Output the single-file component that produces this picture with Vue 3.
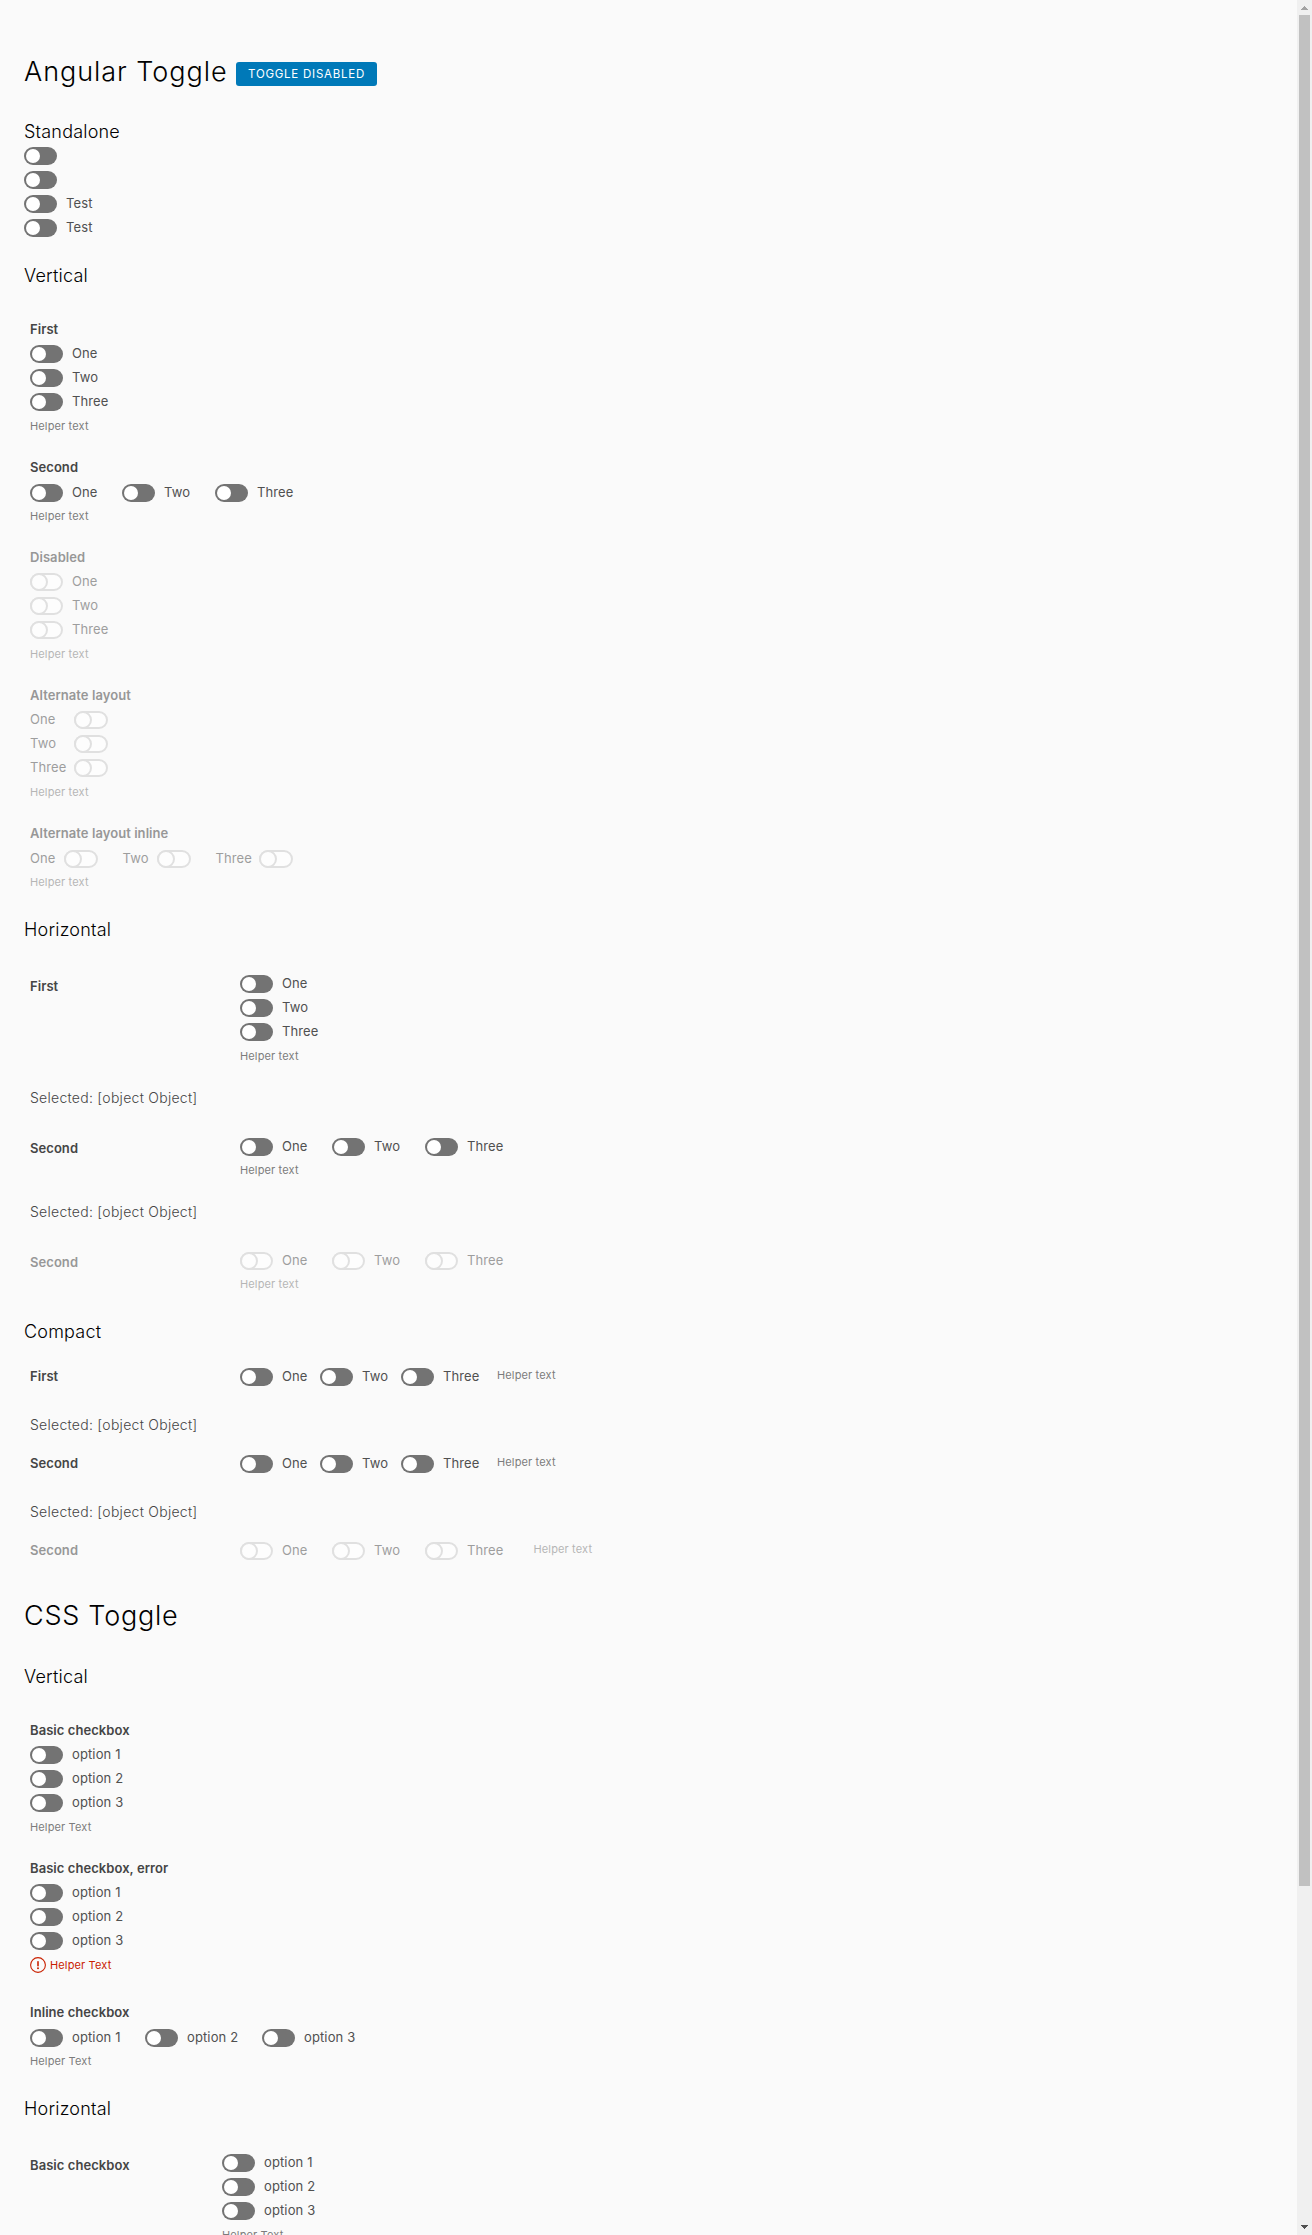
<script setup>
import { h } from 'vue'

const names = ['One', 'Two', 'Three']
const options = ['option 1', 'option 2', 'option 3']

const verticalGroups = [
  { title: 'First', items: names },
  { title: 'Second', items: names, inline: true, widths: [92, 93, 90] },
  { title: 'Disabled', items: names, disabled: true },
  { title: 'Alternate layout', items: names, disabled: true, alt: true },
  { title: 'Alternate layout inline', items: names, disabled: true, alt: true, inline: true, widths: [68, 68.5, 77.5] },
]
const cssGroups = [
  { title: 'Basic checkbox', items: options },
  { title: 'Basic checkbox, error', items: options, error: true },
  { title: 'Inline checkbox', items: options, inline: true, widths: [115, 117, 100] },
]
const compactRows = [
  { title: 'First', widths: [80, 81, 96] },
  { title: 'Second', widths: [80, 81, 96] },
  { title: 'Second', widths: [92, 93, 108.5], disabled: true },
]

const Toggle = (props) =>
  h('label', { class: ['toggle', { alt: props.alt }], style: props.width ? { width: props.width + 'px' } : null }, [
    h('span', { class: 'switch' }, [h('i', { class: 'knob' })]),
    props.text ? h('span', { class: 'toggle-text' }, props.text) : null,
  ])
Toggle.props = ['text', 'alt', 'width']
</script>

<template>
  <div class="page">
    <main class="content">
      <div class="heading">
        <h1>Angular Toggle</h1>
        <button class="btn">TOGGLE DISABLED</button>
      </div>

      <h4 class="standalone">Standalone</h4>
      <Toggle /><Toggle /><Toggle text="Test" /><Toggle text="Test" />

      <h4 class="after-list">Vertical</h4>
      <section class="groups">
        <div v-for="g in verticalGroups" :key="g.title" class="group" :class="{ inline: g.inline, disabled: g.disabled, alternate: g.alt }">
          <div class="title">{{ g.title }}</div>
          <div class="items">
            <Toggle v-for="(t, i) in g.items" :key="t" :text="t" :alt="g.alt" :width="g.widths && g.widths[i]" />
          </div>
          <div class="helper">Helper text</div>
        </div>
      </section>

      <h4 class="after-groups">Horizontal</h4>
      <div class="row tall">
        <div class="title">First</div>
        <div class="control">
          <div class="items"><Toggle v-for="t in names" :key="t" :text="t" /></div>
          <div class="helper">Helper text</div>
        </div>
      </div>
      <div class="selected">Selected: [object Object]</div>
      <div class="row inline">
        <div class="title">Second</div>
        <div class="control">
          <div class="items"><Toggle v-for="(t, i) in names" :key="t" :text="t" :width="[92, 93, 90][i]" /></div>
          <div class="helper">Helper text</div>
        </div>
      </div>
      <div class="selected">Selected: [object Object]</div>
      <div class="row inline disabled">
        <div class="title">Second</div>
        <div class="control">
          <div class="items"><Toggle v-for="(t, i) in names" :key="t" :text="t" :width="[92, 93, 90][i]" /></div>
          <div class="helper">Helper text</div>
        </div>
      </div>

      <h4 class="after-list">Compact</h4>
      <section class="compact">
        <template v-for="(r, n) in compactRows" :key="n">
          <div class="compact-row" :class="{ disabled: r.disabled }">
            <div class="title">{{ r.title }}</div>
            <Toggle v-for="(t, i) in names" :key="t" :text="t" :width="r.widths[i]" />
            <div class="helper">Helper text</div>
          </div>
          <div v-if="n < 2" class="selected">Selected: [object Object]</div>
        </template>
      </section>

      <h1 class="second-heading">CSS Toggle</h1>
      <h4 class="after-heading">Vertical</h4>
      <section class="groups">
        <div v-for="g in cssGroups" :key="g.title" class="group" :class="{ inline: g.inline, error: g.error }">
          <div class="title">{{ g.title }}</div>
          <div class="items">
            <Toggle v-for="(t, i) in g.items" :key="t" :text="t" :width="g.widths && g.widths[i]" />
          </div>
          <div class="helper">
            <svg v-if="g.error" class="error-icon" viewBox="0 0 16 16" width="16" height="16">
              <circle cx="8" cy="8" r="7.4" fill="none" stroke="#c92100" stroke-width="1.1" />
              <path d="M8 4.7v4.1" stroke="#c92100" stroke-width="1.6" stroke-linecap="round" />
              <circle cx="8" cy="11.2" r="1" fill="#c92100" />
            </svg>
            <span>Helper Text</span>
          </div>
        </div>
      </section>

      <h4 class="after-groups">Horizontal</h4>
      <div class="row tall narrow">
        <div class="title">Basic checkbox</div>
        <div class="control">
          <div class="items"><Toggle v-for="t in options" :key="t" :text="t" /></div>
          <div class="helper">Helper Text</div>
        </div>
      </div>
    </main>
    <aside class="scrollbar">
      <svg width="15" height="15" viewBox="0 0 15 15" shape-rendering="crispEdges"><path d="M7 6h1v1h1v1h1v1h1v1H4V9h1V8h1V7h1z" fill="#a3a3a3" /></svg>
      <div class="thumb"></div>
      <svg width="15" height="15" viewBox="0 0 15 15" shape-rendering="crispEdges"><path d="M4 5h7v1h-1v1H9v1H8v1H7V8H6V7H5V6H4z" fill="#505050" /></svg>
    </aside>
  </div>
</template>

<style>
body { margin: 0; background: #fafafa; overflow: hidden; }
</style>

<style scoped>
.page {
  display: flex;
  height: 2235px;
  overflow: hidden;
  background: #fafafa;
  font-family: Inter, "Liberation Sans", sans-serif;
}
.content { flex: 1; min-width: 0; padding: 46px 0 0 24px; overflow: hidden; }
h1, h4 { margin: 0; color: #000; font-weight: 300; white-space: nowrap; }
h1 { height: 48px; font-size: 27px; line-height: 52px; letter-spacing: 0.95px; }
h4 { height: 24px; font-size: 18px; line-height: 25px; letter-spacing: 0.2px; }
.heading { display: flex; height: 48px; }
.heading h1 { width: 212px; }
.btn {
  margin: 16px 0 0;
  width: 141px;
  height: 24px;
  padding: 0;
  border: 0;
  border-radius: 3px;
  background: #0079b8;
  color: #fff;
  font: 400 11.5px/24px Inter, sans-serif;
  letter-spacing: 0.75px;
  white-space: nowrap;
}
.standalone { margin-top: 25px; height: 25px; }
.after-list { margin-top: 23px; }
.after-groups { margin-top: 6px; }
.second-heading { margin-top: 27px; letter-spacing: 0.75px; }
.after-heading { margin-top: 26px; }
:deep(.toggle) { display: flex; flex: none; height: 24px; }
:deep(.switch) {
  box-sizing: border-box;
  flex: none;
  width: 33px;
  height: 18px;
  margin-top: 3px;
  padding: 2px;
  border-radius: 9px;
  background: #737373;
}
:deep(.knob) { display: block; width: 14px; height: 14px; border-radius: 50%; background: #fff; }
:deep(.toggle-text) {
  margin-left: 9px;
  color: #505050;
  font-size: 13px;
  line-height: 23px;
  letter-spacing: 0.12px;
  white-space: nowrap;
}
.groups { margin: 30px 0 0 6px; }
.group { height: 138px; }
.group.inline { height: 90px; }
.group.error { height: 144px; }
.title {
  color: #454545;
  font-size: 13px;
  font-weight: 600;
  line-height: 25px;
  letter-spacing: 0.06px;
  white-space: nowrap;
}
.group .title { height: 25px; }
.group.inline .title { height: 26px; }
.inline .items { display: flex; height: 23px; }
.helper {
  display: flex;
  color: #7c7c7c;
  font-size: 11px;
  line-height: 24px;
  letter-spacing: 0.14px;
  white-space: nowrap;
}
.error .helper { color: #c92100; }
.error-icon { margin: 4px 4px 0 0; }
.disabled .title, .disabled :deep(.toggle-text), .disabled .helper { opacity: 0.54; }
.disabled :deep(.switch) { padding: 0; background: #fdfdfd; border: 2px solid #e0e0e0; }
.disabled :deep(.knob) {
  box-sizing: border-box;
  width: 18px;
  height: 18px;
  margin: -2px 0 0 -2px;
  border: 2px solid #e0e0e0;
  background: #fdfdfd;
}
:deep(.toggle.alt) { flex-direction: row-reverse; justify-content: space-between; }
:deep(.alt .toggle-text) { margin-left: 0; }
:deep(.alt .switch) { width: 34px; }
.alternate .items { width: 78px; }
.alternate.inline .items { width: auto; gap: 24.5px; }
.row { display: flex; margin: 25px 0 0 6px; }
.row.tall { margin-top: 31px; }
.row .title { width: 210px; padding-top: 1px; height: 24px; }
.row.tall .title { padding-top: 2px; }
.row.narrow .title { width: 192px; }
.selected {
  height: 24px;
  margin: 18px 0 0 6px;
  color: #454545;
  font-size: 14px;
  font-weight: 300;
  line-height: 24px;
  letter-spacing: 0.27px;
}
.compact { margin-top: 22px; }
.compact-row { display: flex; height: 24px; margin: 15px 0 0 6px; }
.compact-row .title { width: 210px; margin-top: -1px; }
.compact-row .helper { margin-top: -2px; }
.compact .selected { margin-top: 24px; }
.scrollbar { display: flex; flex-direction: column; flex: none; width: 15px; background: #f0f0f0; }
.scrollbar svg { display: block; flex: none; }
.thumb { width: 11px; height: 1871px; margin: 0 2px auto; background: #c1c1c1; }
</style>
